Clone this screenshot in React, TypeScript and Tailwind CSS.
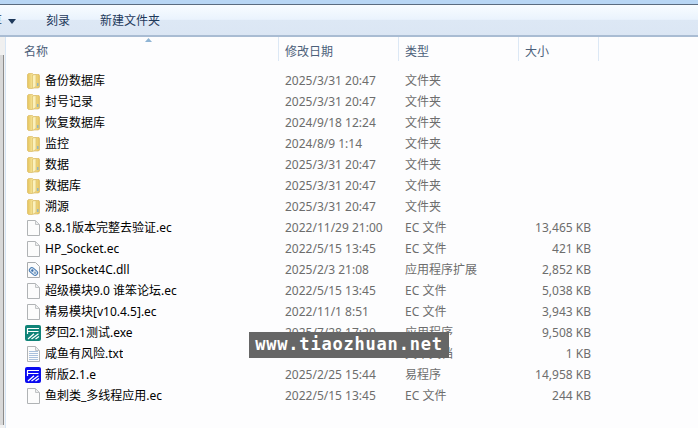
const rows = [
  { name: "备份数据库", date: "2025/3/31 20:47", type: "文件夹", size: "", icon: "folder" },
  { name: "封号记录", date: "2025/3/31 20:47", type: "文件夹", size: "", icon: "folder" },
  { name: "恢复数据库", date: "2024/9/18 12:24", type: "文件夹", size: "", icon: "folder" },
  { name: "监控", date: "2024/8/9 1:14", type: "文件夹", size: "", icon: "folder" },
  { name: "数据", date: "2025/3/31 20:47", type: "文件夹", size: "", icon: "folder" },
  { name: "数据库", date: "2025/3/31 20:47", type: "文件夹", size: "", icon: "folder" },
  { name: "溯源", date: "2025/3/31 20:47", type: "文件夹", size: "", icon: "folder" },
  { name: "8.8.1版本完整去验证.ec", date: "2022/11/29 21:00", type: "EC 文件", size: "13,465 KB", icon: "file" },
  { name: "HP_Socket.ec", date: "2022/5/15 13:45", type: "EC 文件", size: "421 KB", icon: "file" },
  { name: "HPSocket4C.dll", date: "2025/2/3 21:08", type: "应用程序扩展", size: "2,852 KB", icon: "dll" },
  { name: "超级模块9.0 谁笨论坛.ec", date: "2022/5/15 13:45", type: "EC 文件", size: "5,038 KB", icon: "file" },
  { name: "精易模块[v10.4.5].ec", date: "2022/11/1 8:51", type: "EC 文件", size: "3,943 KB", icon: "file" },
  { name: "梦回2.1测试.exe", date: "2025/7/28 17:20", type: "应用程序", size: "9,508 KB", icon: "exe" },
  { name: "咸鱼有风险.txt", date: "2025/3/14 9:21", type: "文本文档", size: "1 KB", icon: "txt" },
  { name: "新版2.1.e", date: "2025/2/25 15:44", type: "易程序", size: "14,958 KB", icon: "e" },
  { name: "鱼刺类_多线程应用.ec", date: "2022/5/15 13:45", type: "EC 文件", size: "244 KB", icon: "file" },
];

const FolderIcon = () => (
  <svg width="13" height="16" viewBox="0 0 13 16">
    <defs>
      <linearGradient id="fold" x1="0" y1="0" x2="1" y2="0">
        <stop offset="0" stopColor="#e6c45a" />
        <stop offset="0.5" stopColor="#f8e9a6" />
        <stop offset="1" stopColor="#e4c25c" />
      </linearGradient>
    </defs>
    <path d="M0.5 1.5 L1.5 0.5 H5.5 L6.5 1.5 H12 L12.5 2.5 V14 L11.5 15 H5.5 L5 15.5 H1.5 L0.5 14.5 Z" fill="url(#fold)" stroke="#d6b457" strokeWidth="0.6" />
    <path d="M5.5 2 L9 1.5 V13.5 L5.5 15.5 Z" fill="#fbf1bd" stroke="#d9b95c" strokeWidth="0.6" />
    <path d="M10.8 10 V13" stroke="#7fb1d3" strokeWidth="1.2" />
  </svg>
);

const FileIcon = ({ lines = false }: { lines?: boolean }) => (
  <svg width="13" height="16" viewBox="0 0 13 16">
    <path d="M0.5 0.5 H8.5 L12.5 4.5 V15.5 H0.5 Z" fill="#fcfcfc" stroke="#b0b3b5" />
    <path d="M8.5 0.5 V4.5 H12.5 Z" fill="#eceeee" stroke="#c2c4c6" />
    {lines && (
      <path d="M2 5.5 H11 M2 7.5 H11 M2 9.5 H11 M2 11.5 H11 M2 13.5 H11" stroke="#a9c0dc" />
    )}
  </svg>
);

const DllIcon = () => (
  <svg width="13" height="16" viewBox="0 0 13 16">
    <path d="M0.5 0.5 H8.5 L12.5 4.5 V15.5 H0.5 Z" fill="#fcfcfc" stroke="#a9acae" />
    <g transform="rotate(40 6.5 9.5)">
      <rect x="2" y="7" width="9" height="5" rx="2.2" fill="#dbe8f4" stroke="#4a7db5" />
      <circle cx="5" cy="9.5" r="1.2" fill="#3c6ea8" />
      <circle cx="8.5" cy="9.5" r="1.2" fill="#8fa9c4" />
    </g>
  </svg>
);

const EIcon = ({ color }: { color: string }) => (
  <svg width="16" height="16" viewBox="0 0 16 16">
    <rect x="0" y="0" width="16" height="16" rx="2" fill={color} />
    <path d="M2 3.5 H14 M2.5 3.5 V9 M2.5 6.5 H13.5" stroke="#fff" strokeWidth="1.2" fill="none" />
    <path d="M3 14 L9 8.8 M6.5 14 L13.5 8.8 M10.5 14 L14 11.5" stroke="#fff" strokeWidth="1.3" fill="none" />
  </svg>
);

const RowIcon = ({ icon }: { icon: string }) => {
  if (icon === "folder") return <FolderIcon />;
  if (icon === "dll") return <DllIcon />;
  if (icon === "txt") return <FileIcon lines />;
  if (icon === "exe") return <EIcon color="#0f8378" />;
  if (icon === "e") return <EIcon color="#0a0af0" />;
  return <FileIcon />;
};

export default function App() {
  return (
    <div className="relative flex h-[428px] w-[698px] flex-col overflow-hidden bg-[#fdfdfe] text-[12px] font-['Noto_Sans','Noto_Sans_CJK_SC',sans-serif]">
      {/* window frame */}
      <div className="h-[4px] shrink-0 bg-[#b8d6f4]" />
      <div className="h-[1px] shrink-0 bg-[#5a6b7f]" />

      {/* toolbar */}
      <div className="flex h-[32px] shrink-0 items-center overflow-hidden border-b-2 border-[#a9bcd3] bg-[linear-gradient(to_bottom,#f8fcff_0%,#eaf3fd_48%,#dde8f5_50%,#dbe6f4_100%)] pt-[2px] text-[#1e395b]">
        <span className="-ml-[10px] shrink-0">享</span>
        <svg width="8" height="5" viewBox="0 0 8 5" className="ml-[6px] shrink-0">
          <path d="M0 0 H8 L4 5 Z" fill="#1e395b" />
        </svg>
        <span className="ml-[30px]">刻录</span>
        <span className="ml-[30px]">新建文件夹</span>
      </div>

      <div className="flex min-h-0 flex-1">
        {/* left pane edge */}
        <div className="flex w-[6px] shrink-0 flex-col border-r border-[#d6e5f5] bg-[#f0f0f0] pb-[3px] pt-[18px]">
          <div className="h-full w-[4px] border-r border-[#8b8b8b] bg-[#d8d8d8]" />
        </div>

        <div className="min-w-0 flex-1 pl-[18px]">
          {/* column headers */}
          <div className="relative flex h-[24px] items-start text-[#4c607a]">
            <span className="h-[24px] w-[255px] border-r border-[#dce8f5] pt-[3px] leading-[24px]">名称</span>
            <span className="h-[24px] w-[120px] border-r border-[#dce8f5] pl-[6px] pt-[3px] leading-[24px]">修改日期</span>
            <span className="h-[24px] w-[120px] border-r border-[#dce8f5] pl-[6px] pt-[3px] leading-[24px]">类型</span>
            <span className="h-[24px] w-[80px] border-r border-[#dce8f5] pl-[6px] pt-[3px] leading-[24px]">大小</span>
            <svg width="7" height="4" viewBox="0 0 7 4" className="absolute left-[121px] top-[1px]">
              <path d="M3.5 0 L7 4 H0 Z" fill="#8fb4d4" />
            </svg>
          </div>

          {/* file rows */}
          <div className="pt-[9px]">
            {rows.map((row) => (
              <div key={row.name} className="flex h-[21px] items-center">
                <div className="flex w-[254px] items-center">
                  <div className="flex w-[21px] shrink-0 justify-center pr-[3px]">
                    <RowIcon icon={row.icon} />
                  </div>
                  <span className="truncate text-black">{row.name}</span>
                </div>
                <span className="w-[120px] pl-[7px] text-[#6d6d6d]">{row.date}</span>
                <span className="w-[120px] pl-[7px] text-[#6d6d6d]">{row.type}</span>
                <span className="w-[73px] text-right text-[#6d6d6d]">{row.size}</span>
              </div>
            ))}
          </div>
        </div>
      </div>

      {/* watermark */}
      <div className="absolute left-[249px] top-[332px] flex h-[26px] w-[200px] items-center justify-center bg-[#666666] font-['DejaVu_Sans_Mono',monospace] text-[17px] font-bold tracking-[0.8px] text-white">
        www.tiaozhuan.net
      </div>
    </div>
  );
}
